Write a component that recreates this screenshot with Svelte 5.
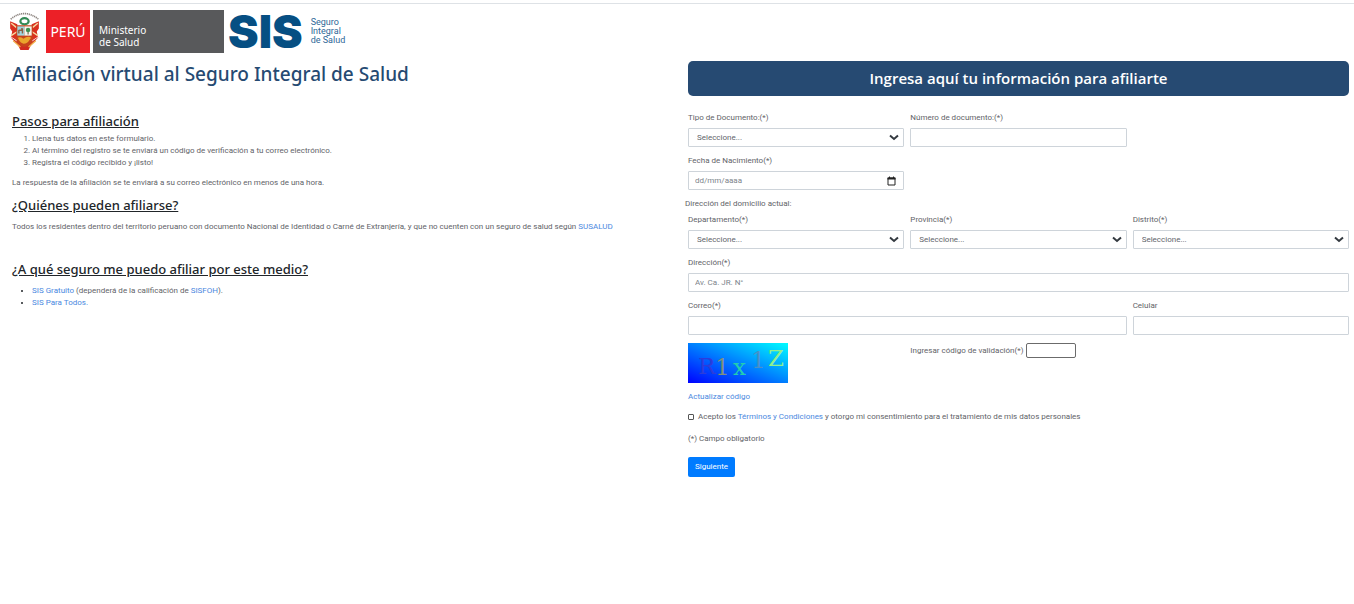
<script>
  const steps = [
    'Llena tus datos en este formulario.',
    'Al término del registro se te enviará un código de verificación a tu correo electrónico.',
    'Registra el código recibido y ¡listo!'
  ];

  let tipoDocumento = '';
  let numeroDocumento = '';
  let fechaNacimiento = '';
  let departamento = '';
  let provincia = '';
  let distrito = '';
  let direccion = '';
  let correo = '';
  let celular = '';
  let codigo = '';
  let acepta = false;
</script>

<header class="brand">
  <svg class="escudo" viewBox="0 0 30 40" aria-hidden="true">
    <path d="M1.5 8 Q15 -3 28.5 8" fill="none" stroke="#8d8580" stroke-width="1.6" stroke-dasharray="1.2 .7" />
    <path d="M1 10 L8 13 L8 29 L2 25 L3 20 L1 17 Z" fill="#d9301f" />
    <path d="M29 10 L22 13 L22 29 L28 25 L27 20 L29 17 Z" fill="#d9301f" />
    <path d="M2 12 L7 16 M2 24 L8 20 M28 12 L23 16 M28 24 L22 20" stroke="#f6d9a0" stroke-width="1.4" />
    <path d="M1 25 L9 34 L11 38 L19 38 L21 34 L29 25 L22 30 L8 30 Z" fill="#d22a20" />
    <path d="M4 29 L11 35 M26 29 L19 35" stroke="#efb04a" stroke-width="1.3" />
    <ellipse cx="15" cy="10" rx="4" ry="3" fill="#fff" stroke="#348a56" stroke-width="2.2" />
    <path d="M7 14 H23 V27 Q23 34 15 35 Q7 34 7 27 Z" fill="#c7431c" />
    <path d="M8 15 H15 V24 H8 Z" fill="#9fd4df" />
    <path d="M15 15 H22 V24 H15 Z" fill="#f4f4ec" />
    <path d="M9.5 22 V19 L13 18 V22 M12.5 18 V16.5" stroke="#8b6042" stroke-width="1.4" fill="none" />
    <path d="M18.5 23 V19" stroke="#6b4e2e" stroke-width="1" />
    <circle cx="18.5" cy="18.5" r="2.2" fill="#3d9152" />
    <path d="M8.5 26 Q11 25 14 27 Q18 24 21.5 26 L20 28 Q18 32 14 32 Q11 31 10 29 Z" fill="#eaa52c" />
  </svg>
  <div class="peru">PERÚ</div>
  <div class="ministry">Ministerio<br />de Salud</div>
  <div class="sis">SIS</div>
  <div class="sis-name">Seguro<br />Integral<br />de Salud</div>
</header>

<main>
  <section class="info">
    <h1>Afiliación virtual al Seguro Integral de Salud</h1>

    <h2>Pasos para afiliación</h2>
    <ol>
      {#each steps as step}
        <li>{step}</li>
      {/each}
    </ol>
    <p>La respuesta de la afiliación se te enviará a su correo electrónico en menos de una hora.</p>

    <h2>¿Quiénes pueden afiliarse?</h2>
    <p class="who">
      Todos los residentes dentro del territorio peruano con documento Nacional de Identidad o Carné de Extranjería, y que no cuenten con un seguro de salud según <a href="#susalud">SUSALUD</a>
    </p>

    <h2>¿A qué seguro me puedo afiliar por este medio?</h2>
    <ul>
      <li><a href="#gratuito">SIS Gratuito</a> (dependerá de la calificación de <a href="#sisfoh">SISFOH</a>).</li>
      <li><a href="#para-todos">SIS Para Todos.</a></li>
    </ul>
  </section>

  <form on:submit|preventDefault>
    <h2 class="banner">Ingresa aquí tu información para afiliarte</h2>

    <div class="fields">
      <div class="field">
        <label for="tipo">Tipo de Documento:(*)</label>
        <select id="tipo" bind:value={tipoDocumento}>
          <option value="">Seleccione...</option>
        </select>
      </div>
      <div class="field">
        <label for="numero">Número de documento:(*)</label>
        <input id="numero" type="text" bind:value={numeroDocumento} />
      </div>
      <div class="field first">
        <label for="fecha">Fecha de Nacimiento(*)</label>
        <div class="date">
          <input id="fecha" type="text" placeholder="dd/mm/aaaa" bind:value={fechaNacimiento} />
          <svg viewBox="0 0 9 10" aria-hidden="true">
            <path d="M1 2 H8 V9 H1 Z" fill="none" stroke="#222" stroke-width="1" />
            <path d="M.5 1.5 H8.5 V3.5 H.5 Z M2 .5 H3 V2 H2 Z M6 .5 H7 V2 H6 Z" fill="#222" />
          </svg>
        </div>
      </div>
    </div>

    <p class="address">Dirección del domicilio actual:</p>

    <div class="fields">
      <div class="field">
        <label for="departamento">Departamento(*)</label>
        <select id="departamento" bind:value={departamento}>
          <option value="">Seleccione...</option>
        </select>
      </div>
      <div class="field">
        <label for="provincia">Provincia(*)</label>
        <select id="provincia" bind:value={provincia}>
          <option value="">Seleccione...</option>
        </select>
      </div>
      <div class="field">
        <label for="distrito">Distrito(*)</label>
        <select id="distrito" bind:value={distrito}>
          <option value="">Seleccione...</option>
        </select>
      </div>
      <div class="field full">
        <label for="direccion">Dirección(*)</label>
        <input id="direccion" type="text" placeholder="Av. Ca. JR. N°" bind:value={direccion} />
      </div>
      <div class="field wide">
        <label for="correo">Correo(*)</label>
        <input id="correo" type="email" bind:value={correo} />
      </div>
      <div class="field">
        <label for="celular">Celular</label>
        <input id="celular" type="tel" bind:value={celular} />
      </div>
      <div class="captcha">
        <svg viewBox="0 0 100 40" role="img" aria-label="Código de validación">
          <defs>
            <linearGradient id="fondo" gradientUnits="userSpaceOnUse" x1="36" y1="55" x2="64" y2="-15">
              <stop offset="0" stop-color="#0000ff" />
              <stop offset="1" stop-color="#00ffff" />
            </linearGradient>
          </defs>
          <rect width="100" height="40" fill="url(#fondo)" />
          <g font-family="'DejaVu Serif', serif" font-size="23">
            <text x="10" y="31" fill="#2b3cdb">R</text>
            <text x="27" y="32" fill="#7f917f">1</text>
            <text x="45" y="32" fill="#22cdb0">x</text>
            <text x="63" y="25" fill="#4a90c8">1</text>
            <text x="80" y="23" fill="#8ff08f">Z</text>
          </g>
        </svg>
      </div>
      <div class="code">
        <label for="codigo">Ingresar código de validación(*)</label>
        <input id="codigo" type="text" bind:value={codigo} />
      </div>
    </div>

    <p class="refresh"><a href="#actualizar">Actualizar código</a></p>
    <div class="terms">
      <input id="acepta" type="checkbox" bind:checked={acepta} />
      <label for="acepta">Acepto los <a href="#terminos">Términos y Condiciones</a> y otorgo mi consentimiento para el tratamiento de mis datos personales</label>
    </div>
    <p class="required">(*) Campo obligatorio</p>
    <button type="submit">Siguiente</button>
  </form>
</main>

<style>
  :global(body) {
    background: #fff;
    color: #5f6368;
    font-family: Roboto, 'Open Sans', sans-serif;
    font-size: 8px;
    line-height: 12px;
  }

  :global(#app) {
    padding-top: 3px;
  }

  .brand {
    display: flex;
    align-items: center;
    height: 43px;
    padding: 6px 9px 7px;
    border-top: 1px solid #dee2e6;
    color: #fff;
  }

  .escudo {
    width: 31px;
    height: 41px;
    margin-right: 6px;
  }

  .peru,
  .ministry {
    display: flex;
    align-items: center;
    box-sizing: border-box;
    height: 43px;
    font-family: 'Noto Sans', sans-serif;
  }

  .peru {
    justify-content: center;
    width: 44px;
    margin-right: 3px;
    background: #ec2027;
    font-size: 14px;
  }

  .ministry {
    width: 131px;
    padding: 9px 6px 0;
    background: #58595b;
    font-size: 10px;
    line-height: 12px;
  }

  .sis {
    margin-left: 4px;
    color: #064f83;
    font-family: Inter, sans-serif;
    font-size: 46px;
    font-weight: 900;
    line-height: 43px;
  }

  .sis-name {
    margin-left: 8px;
    color: #2e6797;
    font-size: 9px;
    line-height: 9px;
  }

  main {
    display: grid;
    grid-template-columns: 1fr 1fr;
    align-items: start;
  }

  .info {
    padding: 2px 12px;
  }

  h1,
  h2,
  p,
  ol,
  ul {
    margin: 0;
  }

  h1,
  .info h2 {
    font-family: 'Noto Sans', sans-serif;
    font-weight: 500;
  }

  h1 {
    margin-bottom: 27px;
    color: #264a72;
    font-size: 19px;
    line-height: 24px;
  }

  .info h2 {
    margin-bottom: 4px;
    color: #212529;
    font-size: 13px;
    line-height: 16px;
    text-decoration: underline;
  }

  ol,
  ul {
    padding-left: 20px;
  }

  ol {
    margin-bottom: 8px;
  }

  .info p {
    margin-bottom: 8px;
  }

  .info .who {
    padding-top: 4px;
    margin-bottom: 28px;
  }

  ul {
    padding-top: 4px;
  }

  ul li::marker {
    color: #212529;
  }

  a {
    color: #4a88e0;
    text-decoration: none;
  }

  form {
    padding: 1px 5px 0 11px;
  }

  .banner {
    margin-bottom: 16px;
    border-radius: 5px;
    background: #264a72;
    color: #fff;
    font-family: 'Open Sans', sans-serif;
    font-size: 15px;
    font-weight: 600;
    line-height: 35px;
    text-align: center;
  }

  .fields {
    display: grid;
    grid-template-columns: repeat(3, 1fr);
    gap: 8px 6px;
  }

  .field {
    display: flex;
    flex-direction: column;
    gap: 4px;
    min-width: 0;
  }

  .first {
    grid-column: 1;
  }

  .wide {
    grid-column: span 2;
  }

  .full {
    grid-column: 1 / -1;
  }

  input,
  select {
    box-sizing: border-box;
    width: 100%;
    height: 19px;
    margin: 0;
    padding: 0 6px;
    border: 1px solid #ced4da;
    border-radius: 1px;
    background: #fff;
    color: #5f656b;
    font: inherit;
  }

  input::placeholder {
    color: #7d848b;
    opacity: 1;
  }

  select {
    padding: 0 8px;
    appearance: none;
    background: #fff url("data:image/svg+xml,%3Csvg xmlns='http://www.w3.org/2000/svg' viewBox='0 0 10 7'%3E%3Cpath d='M1 1.5 L5 5 L9 1.5' fill='none' stroke='%23343a40' stroke-width='2'/%3E%3C/svg%3E") no-repeat right 4px center / 10px 7px;
  }

  .date {
    display: grid;
    align-items: center;
  }

  .date input,
  .date svg {
    grid-area: 1 / 1;
  }

  .date svg {
    justify-self: end;
    width: 9px;
    height: 10px;
    margin-right: 8px;
  }

  .address {
    margin: 8px -3px 4px;
  }

  .captcha svg {
    display: block;
    width: 100px;
    height: 40px;
  }

  .code {
    display: flex;
    gap: 3px;
    align-items: center;
    align-self: start;
  }

  .code input {
    width: 50px;
    height: 15px;
    border-color: #6b6b6b;
    border-radius: 2px;
  }

  .refresh {
    margin: 8px 0;
  }

  .terms {
    display: flex;
    gap: 4px;
    align-items: center;
  }

  .terms input {
    width: 6px;
    height: 6px;
    appearance: none;
    padding: 0;
    border-color: #555;
  }

  .terms input:checked {
    background: #007bff;
  }

  .required {
    margin: 10px 0 12px;
  }

  button {
    padding: 4px 7px;
    border: 0;
    border-radius: 2px;
    background: #007bff;
    color: #fff;
    font: inherit;
  }
</style>
